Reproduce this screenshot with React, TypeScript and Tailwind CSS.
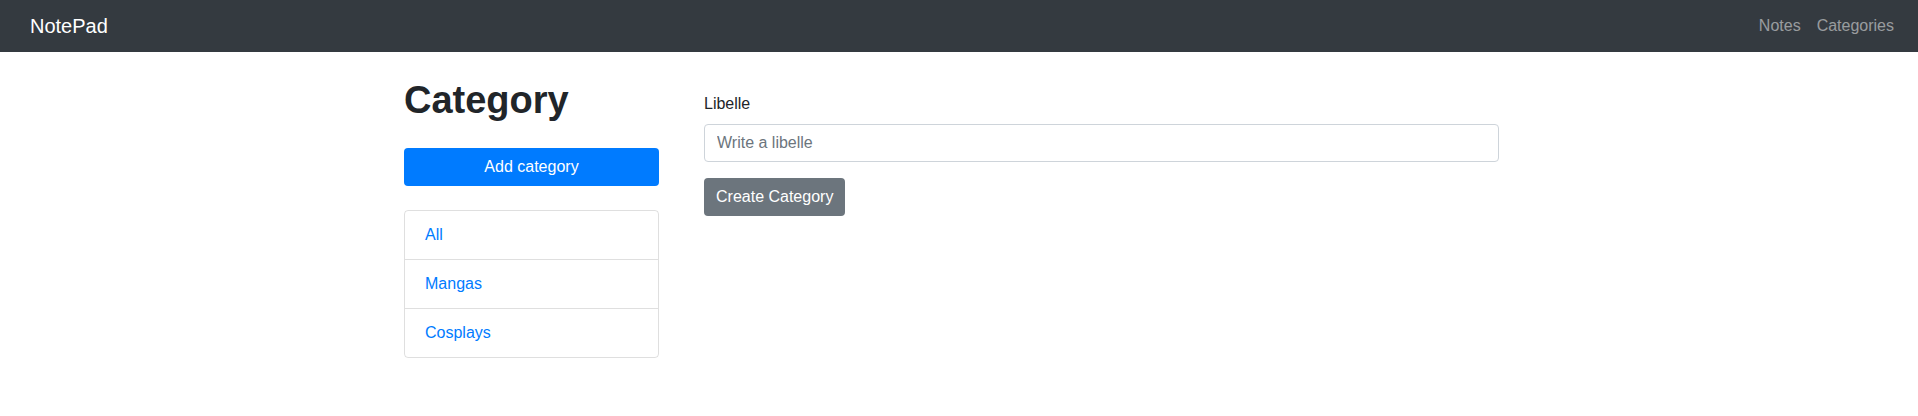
import React from "react";

export default function App() {
  return (
    <div className="min-h-[416px] bg-white text-[#212529] font-['Segoe_UI','Liberation_Sans',Arial,sans-serif] text-[16px] leading-[1.5]">
      <nav className="flex h-[52px] items-center justify-between bg-[#343a40] pl-[30px] pr-4">
        <a className="text-[20px] leading-[30px] text-white" href="#">
          NotePad
        </a>
        <div className="flex items-center">
          <a className="px-2 text-[rgba(255,255,255,0.5)]" href="#">
            Notes
          </a>
          <a className="px-2 text-[rgba(255,255,255,0.5)]" href="#">
            Categories
          </a>
        </div>
      </nav>
      <div className="mx-auto mt-6 flex w-[1140px]">
        <div className="w-[285px] px-[15px]">
          <h1 className="text-[38px] font-semibold leading-[48px] text-[#212529]">Category</h1>
          <button className="mt-6 block h-[38px] w-full rounded bg-[#007bff] text-white">
            Add category
          </button>
          <div className="mt-6 flex flex-col rounded border border-[rgba(0,0,0,0.125)]">
            <a className="px-5 py-3 text-[#007bff]" href="#">
              All
            </a>
            <a className="border-t border-[rgba(0,0,0,0.125)] px-5 py-3 text-[#007bff]" href="#">
              Mangas
            </a>
            <a className="border-t border-[rgba(0,0,0,0.125)] px-5 py-3 text-[#007bff]" href="#">
              Cosplays
            </a>
          </div>
        </div>
        <div className="w-[855px] px-[15px]">
          <div className="px-[15px] pt-4">
            <label className="mb-2 block">Libelle</label>
            <input
              className="block h-[38px] w-full rounded border border-[#ced4da] px-3 text-[#495057] outline-none placeholder:text-[#6c757d]"
              placeholder="Write a libelle"
            />
            <button className="mt-4 h-[38px] rounded bg-[#6c757d] px-3 text-white">
              Create Category
            </button>
          </div>
        </div>
      </div>
    </div>
  );
}
